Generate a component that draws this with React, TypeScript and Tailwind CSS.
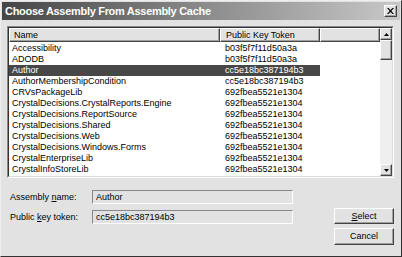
import React from "react";

const rows: [string, string][] = [
  ["Accessibility", "b03f5f7f11d50a3a"],
  ["ADODB", "b03f5f7f11d50a3a"],
  ["Author", "cc5e18bc387194b3"],
  ["AuthorMembershipCondition", "cc5e18bc387194b3"],
  ["CRVsPackageLib", "692fbea5521e1304"],
  ["CrystalDecisions.CrystalReports.Engine", "692fbea5521e1304"],
  ["CrystalDecisions.ReportSource", "692fbea5521e1304"],
  ["CrystalDecisions.Shared", "692fbea5521e1304"],
  ["CrystalDecisions.Web", "692fbea5521e1304"],
  ["CrystalDecisions.Windows.Forms", "692fbea5521e1304"],
  ["CrystalEnterpriseLib", "692fbea5521e1304"],
  ["CrystalInfoStoreLib", "692fbea5521e1304"],
];

const raised =
  "border border-t-white border-l-white border-r-[#444] border-b-[#444] shadow-[inset_-1px_-1px_0_#a0a0a0]";

export default function App() {
  return (
    <div
      className="w-[402px] h-[257px] bg-[#e2e2e2] border border-t-[#eee] border-l-[#eee] border-r-[#333] border-b-[#333] flex flex-col text-[9px] text-black leading-none overflow-hidden"
      style={{ fontFamily: '"Liberation Sans", Arial, sans-serif' }}
    >
      {/* title bar */}
      <div className="mx-[1px] mt-[1px] h-[18px] flex items-center justify-between bg-gradient-to-r from-[#464646] via-[#8a8a8a] to-[#c8c8c8] pl-[3px] pr-[3px]">
        <span className="text-white font-bold text-[11px] tracking-[-0.3px]">
          Choose Assembly From Assembly Cache
        </span>
        <div className={`w-[13px] h-[12px] bg-[#e2e2e2] ${raised} flex items-center justify-center`}>
          <svg width="7" height="6" viewBox="0 0 7 6">
            <path d="M0 0h1.5L3.5 2L5.5 0H7L4.3 3L7 6H5.5L3.5 4L1.5 6H0L2.7 3Z" fill="#000" />
          </svg>
        </div>
      </div>

      {/* list view */}
      <div className="ml-[6px] mt-[6px] w-[387px] h-[152px] border border-t-[#888] border-l-[#888] border-r-white border-b-white">
        <div className="w-full h-full border border-t-[#333] border-l-[#333] border-r-[#ddd] border-b-[#ddd] bg-white flex">
          <div className="flex-1 flex flex-col">
            <div className="flex h-[14px] bg-[#e2e2e2]">
              <div className={`w-[211px] ${raised} pl-[4px] flex items-center`}>Name</div>
              <div className={`w-[100px] ${raised} pl-[5px] flex items-center`}>Public Key Token</div>
              <div className={`flex-1 ${raised}`} />
            </div>
            <div className="flex flex-col pt-[1px]">
              {rows.map(([n, t]) => {
                const sel = n === "Author";
                return (
                  <div key={n} className="flex h-[11px] items-center">
                    <div
                      className={`flex items-center h-full w-[311px] ${
                        sel ? "bg-[#474747] text-white" : ""
                      }`}
                    >
                      <span className="w-[211px] pl-[3px] whitespace-nowrap">{n}</span>
                      <span className="pl-[5px] whitespace-nowrap">{t}</span>
                    </div>
                  </div>
                );
              })}
            </div>
          </div>
          {/* scrollbar */}
          <div className="w-[12px] flex flex-col bg-[#efefef]">
            <div className={`h-[12px] bg-[#e2e2e2] ${raised} flex items-center justify-center`}>
              <svg width="5" height="3" viewBox="0 0 5 3">
                <path d="M2.5 0L5 3H0Z" fill="#000" />
              </svg>
            </div>
            <div className={`h-[20px] bg-[#e2e2e2] ${raised}`} />
            <div className="flex-1" />
            <div className={`h-[12px] bg-[#e2e2e2] ${raised} flex items-center justify-center`}>
              <svg width="5" height="3" viewBox="0 0 5 3">
                <path d="M0 0H5L2.5 3Z" fill="#000" />
              </svg>
            </div>
          </div>
        </div>
      </div>

      {/* bottom */}
      <div className="flex mt-[12px] pl-[9px]">
        <div className="flex flex-col gap-[6px]">
          <div className="flex items-center h-[14px]">
            <span className="w-[82px]">
              Assembly <span className="underline">n</span>ame:
            </span>
            <div className="w-[201px] h-[14px] border border-t-[#888] border-l-[#888] border-r-white border-b-white flex items-center pl-[3px]">
              Author
            </div>
          </div>
          <div className="flex items-center h-[14px]">
            <span className="w-[82px]">
              Public <span className="underline">k</span>ey token:
            </span>
            <div className="w-[201px] h-[14px] border border-t-[#888] border-l-[#888] border-r-white border-b-white flex items-center pl-[3px]">
              cc5e18bc387194b3
            </div>
          </div>
        </div>
        <div className="ml-[41px] mt-[18px] flex flex-col gap-[4px]">
          <div className={`w-[60px] h-[16px] ${raised} flex items-center justify-center`}>
            <span>
              <span className="underline">S</span>elect
            </span>
          </div>
          <div className={`w-[60px] h-[17px] ${raised} flex items-center justify-center`}>
            Cancel
          </div>
        </div>
      </div>
    </div>
  );
}
